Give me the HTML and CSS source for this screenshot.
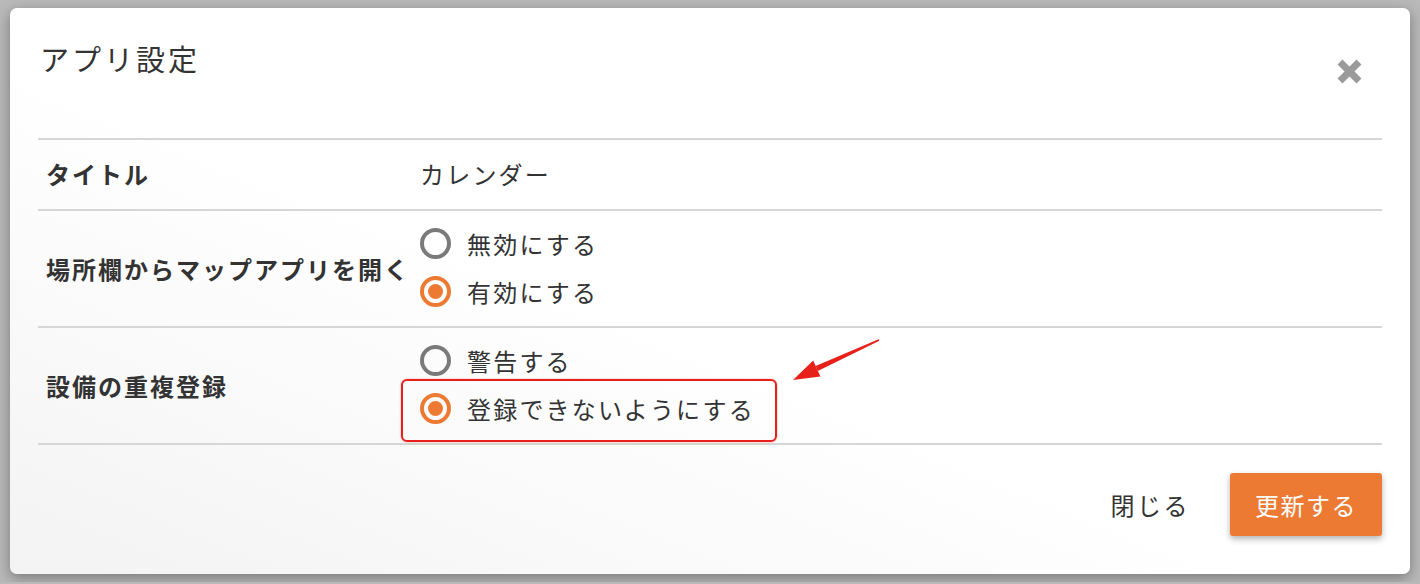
FILE: index.html
```html
<!DOCTYPE html>
<html lang="ja">
<head>
  <meta charset="UTF-8">
  <meta name="viewport" content="width=device-width, initial-scale=1.0">
  <title>アプリ設定</title>
  <link rel="stylesheet" href="styles.css">
</head>
<body>

  <div class="dialog">
    <div class="dialog-header">
      <h2>アプリ設定</h2>
      <button class="close-btn" type="button" aria-label="閉じる">
        <svg width="27" height="27" viewBox="0 0 27 27">
          <path d="M4 4 L23 23 M23 4 L4 23" stroke="#9a9a9a" stroke-width="7" fill="none"/>
        </svg>
      </button>
    </div>

    <div class="settings">
      <div class="setting-row">
        <div class="setting-label">タイトル</div>
        <div class="setting-value">カレンダー</div>
      </div>

      <div class="setting-row">
        <div class="setting-label">場所欄からマップアプリを開く</div>
        <div class="setting-value options">
          <label class="option">
            <input type="radio" name="map" value="off">
            無効にする
          </label>
          <label class="option">
            <input type="radio" name="map" value="on" checked>
            有効にする
          </label>
        </div>
      </div>

      <div class="setting-row">
        <div class="setting-label">設備の重複登録</div>
        <div class="setting-value options">
          <label class="option">
            <input type="radio" name="dup" value="warn">
            警告する
          </label>
          <label class="option highlighted">
            <input type="radio" name="dup" value="deny" checked>
            登録できないようにする
            <!-- 注釈の矢印 -->
            <svg class="annotation-arrow" width="100" height="55" viewBox="0 0 100 55">
              <polygon points="93.4,7.7 92.6,6.3 29.6,33.1 31.8,38.1" fill="#e8201a"/>
              <polygon points="7,47 27.2,27.6 34.4,43.4" fill="#e8201a"/>
            </svg>
          </label>
        </div>
      </div>
    </div>

    <div class="dialog-footer">
      <button class="btn-text" type="button">閉じる</button>
      <button class="btn-primary" type="button">更新する</button>
    </div>
  </div>

</body>
</html>
```

FILE: styles.css
```css
:root {
  --primary-color: #ed7a33;
  --text-color: #333;
  --line-color: #d6d6d6;
  --radio-off: #7a7a7a;
  --mark-color: #e8201a;
}
body {
  font-family: "Noto Sans CJK JP", "Noto Sans", sans-serif;
  background-color: #b9b9b9;
  color: var(--text-color);
  margin: 0;
  padding: 8px 10px;
}
.dialog {
  width: 1400px;
  height: 566px;
  box-sizing: border-box;
  padding: 0 28px;
  border-radius: 7px;
  background: linear-gradient(to top right, #f3f3f3 0%, #fff 45%);
  box-shadow: 0 4px 14px rgba(0,0,0,0.35);
}
.dialog-header {
  height: 130px;
  display: flex;
  justify-content: space-between;
  align-items: flex-start;
}
.dialog-header h2 {
  margin: 29px 0 0 2px;
  font-size: 29px;
  font-weight: normal;
  letter-spacing: 3px;
  line-height: 42px;
}
.close-btn {
  margin: 50px 19px 0 0;
  padding: 0;
  border: none;
  background: none;
  cursor: pointer;
  display: flex;
}

/* 設定テーブル */
.setting-row {
  display: grid;
  grid-template-columns: 382px 1fr;
  align-items: center;
  border-top: 2px solid var(--line-color);
  min-height: 69px;
}
.setting-row:first-child > div {
  margin-bottom: 3px;
}
.setting-row:last-child {
  border-bottom: 2px solid var(--line-color);
}
.setting-label {
  padding-left: 8px;
  font-size: 24px;
  font-weight: bold;
  letter-spacing: 2px;
}
.setting-value {
  font-size: 24px;
  letter-spacing: 2.2px;
}
.options {
  padding: 8px 0 11px;
}
.option {
  position: relative;
  display: flex;
  align-items: center;
  width: max-content;
  height: 48px;
  gap: 16px;
  cursor: pointer;
}
.option input[type="radio"] {
  appearance: none;
  -webkit-appearance: none;
  margin: 0;
  width: 31px;
  height: 31px;
  border: 4px solid var(--radio-off);
  border-radius: 50%;
  box-sizing: border-box;
  display: grid;
  place-items: center;
}
.option input[type="radio"]:checked {
  border-color: var(--primary-color);
}
.option input[type="radio"]:checked::after {
  content: "";
  width: 15px;
  height: 15px;
  border-radius: 50%;
  background-color: var(--primary-color);
}

/* 注釈の赤枠 */
.highlighted::after {
  content: "";
  position: absolute;
  left: -19px;
  right: -22px;
  top: -5px;
  bottom: -10px;
  border: 2px solid var(--mark-color);
  border-radius: 6px;
  box-shadow: 0 0 1.5px rgba(232,32,26,0.6);
  pointer-events: none;
}
.annotation-arrow {
  position: absolute;
  left: 366px;
  top: -51px;
}

.dialog-footer {
  display: flex;
  justify-content: flex-end;
  align-items: center;
  gap: 40px;
  padding-top: 28px;
}
.btn-text {
  border: none;
  background: none;
  padding: 0;
  font-family: inherit;
  font-size: 24px;
  letter-spacing: 2.5px;
  color: var(--text-color);
  cursor: pointer;
}
.btn-primary {
  width: 152px;
  height: 63px;
  border: none;
  border-radius: 3px;
  background-color: var(--primary-color);
  color: #fff;
  font-family: inherit;
  font-size: 24px;
  letter-spacing: 1.5px;
  box-shadow: 0 3px 6px rgba(0,0,0,0.3);
  cursor: pointer;
}
.btn-primary:hover {
  background-color: #e06d25;
}
```
